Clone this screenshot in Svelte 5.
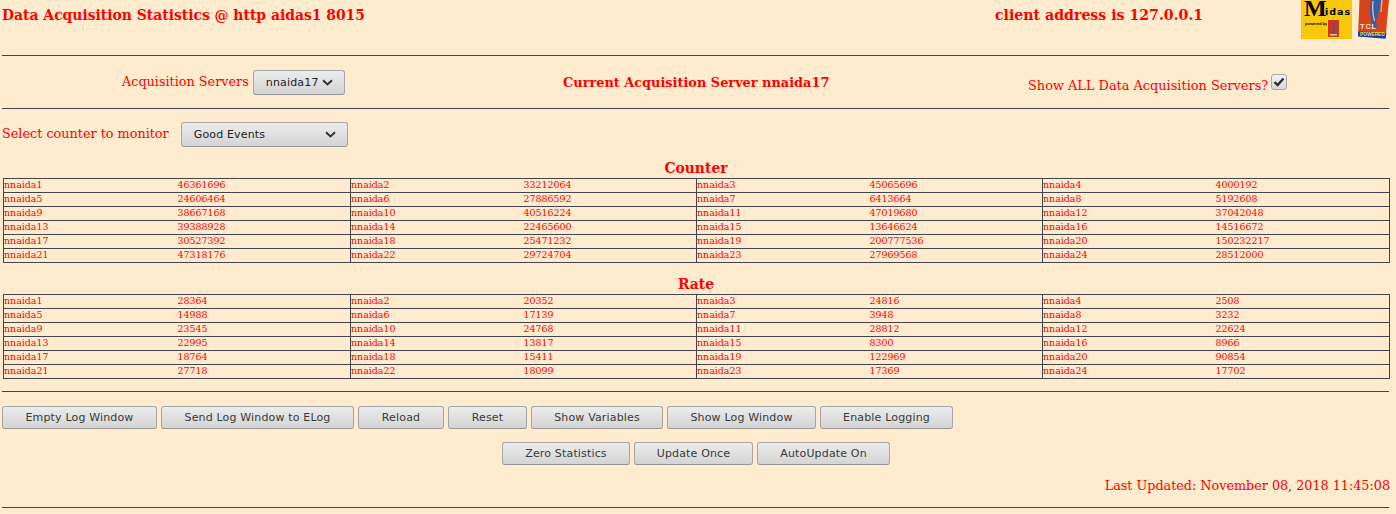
<script>
  const counters = [46361696, 33212064, 45065696, 4000192, 24606464, 27886592, 6413664, 5192608, 38667168, 40516224, 47019680, 37042048, 39388928, 22465600, 13646624, 14516672, 30527392, 25471232, 200777536, 150232217, 47318176, 29724704, 27969568, 28512000];
  const rates = [28364, 20352, 24816, 2508, 14988, 17139, 3948, 3232, 23545, 24768, 28812, 22624, 22995, 13817, 8300, 8966, 18764, 15411, 122969, 90854, 27718, 18099, 17369, 17702];

  const tables = [
    { title: 'Counter', values: counters },
    { title: 'Rate', values: rates }
  ];

  function toRows(values) {
    const rows = [];
    for (let i = 0; i < values.length; i += 4) {
      rows.push(values.slice(i, i + 4).map((v, j) => ({ name: 'nnaida' + (i + j + 1), value: v })));
    }
    return rows;
  }

  const row1 = ['Empty Log Window', 'Send Log Window to ELog', 'Reload', 'Reset', 'Show Variables', 'Show Log Window', 'Enable Logging'];
  const row2 = ['Zero Statistics', 'Update Once', 'AutoUpdate On'];
</script>

<div class="page">
  <header class="top">
    <b class="title">Data Acquisition Statistics @ http aidas1 8015</b>
    <b class="client">client address is 127.0.0.1</b>
    <div class="logo-midas">
      <span class="big-m">M</span>
      <span class="idas">idas</span>
      <span class="powered">powered by</span>
      <svg class="mini-tcl" width="13" height="19" viewBox="0 0 13 19">
        <rect x="0.5" y="0.5" width="12" height="18" fill="#d8301c" stroke="#f5e23a" />
        <path d="M6 3L7.5 3L7.6 10L8.4 14H5.2L6 10Z" fill="#2b5fb0" />
        <rect x="3" y="15" width="7" height="1.5" fill="#f5d23a" />
      </svg>
    </div>
    <div class="logo-tcl">
      <svg width="32" height="39" viewBox="0 0 32 39">
        <path d="M1.5 0H31L27.5 38L0 36Z" fill="#d8431a" />
        <path d="M13 0C11 8 12 16 14 23L13 27H19L18 21L21 10L23 0Z" fill="#2b5fb0" />
        <path d="M15 1C14 9 15 15 16.5 21" stroke="#e8b49a" stroke-width="1.4" fill="none" />
        <path d="M24 0L23 12" stroke="#f0e0d0" stroke-width="1" fill="none" />
        <path d="M0 31.5L28.5 33L27.5 38.8L0 36.5Z" fill="#1238b8" />
      </svg>
      <span class="tcl-word">TCL</span>
      <span class="tcl-sub">POWERED</span>
    </div>
  </header>
  <hr />

  <section class="servers">
    <div class="srv-left">
      <span>Acquisition Servers</span>
      <button class="select small">nnaida17
        <svg width="11" height="7" viewBox="0 0 11 7"><path d="M1 1.2L5.5 5.4L10 1.2" fill="none" stroke="#333" stroke-width="2" /></svg>
      </button>
    </div>
    <b class="srv-current">Current Acquisition Server nnaida17</b>
    <div class="srv-right">
      <span>Show ALL Data Acquisition Servers?</span>
      <span class="check">
        <svg width="12" height="10" viewBox="0 0 12 10"><path d="M1.5 5L4.6 8L10.5 1.5" fill="none" stroke="#2c2c2c" stroke-width="2.4" /></svg>
      </span>
    </div>
  </section>
  <hr />

  <section class="monitor">
    <span>Select counter to monitor</span>
    <button class="select wide">Good Events
      <svg width="11" height="7" viewBox="0 0 11 7"><path d="M1 1.2L5.5 5.4L10 1.2" fill="none" stroke="#333" stroke-width="2" /></svg>
    </button>
  </section>

  {#each tables as t}
    <h3>{t.title}</h3>
    <table>
      <tbody>
        {#each toRows(t.values) as row}
          <tr>
            {#each row as cell}
              <td class="name">{cell.name}</td>
              <td class="val">{cell.value}</td>
            {/each}
          </tr>
        {/each}
      </tbody>
    </table>
  {/each}

  <hr />

  <div class="buttons first">
    {#each row1 as label}
      <button class="btn">{label}</button>
    {/each}
  </div>
  <div class="buttons second">
    {#each row2 as label}
      <button class="btn">{label}</button>
    {/each}
  </div>

  <div class="updated">Last Updated: November 08, 2018 11:45:08</div>
  <hr class="hr-last" />
</div>

<style>
  :global(body) {
    margin: 0;
    background: #ffebcd;
  }

  .page {
    width: 1396px;
    height: 514px;
    overflow: hidden;
    font-family: "DejaVu Serif", serif;
    font-size: 12.8px;
    color: #ff0000;
  }

  hr {
    height: 0;
    margin: 0 7px 0 2px;
    border: 0;
    border-top: 1px solid #44444f;
  }

  .top {
    display: grid;
    grid-template-columns: 993px 306px 57px 32px;
    height: 55px;
    padding-left: 2px;
    font-size: 14px;
  }

  .title,
  .client {
    padding-top: 7px;
    line-height: 16px;
  }

  .title {
    font-size: 13.92px;
  }

  .client {
    font-size: 14.14px;
  }

  .logo-midas {
    position: relative;
    width: 51px;
    height: 39px;
    background: #f8c80c;
    color: #000;
  }

  .big-m {
    position: absolute;
    left: 3px;
    top: 0;
    font-family: "Liberation Serif", serif;
    font-weight: bold;
    font-size: 24px;
    line-height: 17px;
  }

  .idas {
    position: absolute;
    left: 24px;
    top: 6px;
    font-family: "DejaVu Sans", sans-serif;
    font-weight: bold;
    font-size: 9.5px;
    line-height: 11px;
    letter-spacing: 1px;
  }

  .powered {
    position: absolute;
    left: 4px;
    top: 21px;
    font-family: "Liberation Sans", sans-serif;
    font-size: 4px;
    line-height: 5px;
    font-weight: bold;
    white-space: nowrap;
  }

  .mini-tcl {
    position: absolute;
    left: 26px;
    top: 19px;
  }

  .logo-tcl {
    position: relative;
    height: 39px;
  }

  .logo-tcl svg {
    display: block;
  }

  .tcl-word {
    position: absolute;
    left: 2px;
    top: 23px;
    font-family: "Liberation Sans", sans-serif;
    font-weight: bold;
    font-size: 7.5px;
    line-height: 8px;
    letter-spacing: 0.8px;
    color: #f6ecdc;
  }

  .tcl-sub {
    position: absolute;
    left: 2px;
    top: 32px;
    font-family: "Liberation Sans", sans-serif;
    font-weight: bold;
    font-size: 4.8px;
    line-height: 6px;
    color: #e9e23a;
  }

  .servers {
    display: grid;
    grid-template-columns: 561px 465px 1fr;
    height: 52px;
    padding-left: 2px;
  }

  .srv-left {
    display: flex;
    align-items: flex-start;
    gap: 4px;
    padding: 14px 0 0 120px;
  }

  .srv-left span {
    padding-top: 4px;
    line-height: 16px;
  }

  .srv-current {
    padding-top: 19px;
    line-height: 16px;
    font-size: 12.9px;
  }

  .srv-right {
    display: flex;
    align-items: flex-start;
    gap: 3px;
    padding-top: 18px;
    font-size: 12.9px;
  }

  .srv-right span:first-child {
    padding-top: 4px;
    line-height: 16px;
  }

  .check {
    display: flex;
    align-items: center;
    justify-content: center;
    box-sizing: border-box;
    width: 16px;
    height: 16px;
    border: 1px solid #a5a5a5;
    border-radius: 3px;
    background: linear-gradient(#f4f4f4, #d6d6d6);
  }

  .select,
  .btn {
    box-sizing: border-box;
    border: 1px solid #a6a6a6;
    border-bottom-color: #959595;
    border-radius: 3px;
    background: linear-gradient(#ececec, #d4d4d4);
    font-family: "DejaVu Sans", sans-serif;
    font-size: 11px;
    letter-spacing: 0.16px;
  }

  .select {
    display: flex;
    align-items: center;
    justify-content: space-between;
    height: 25px;
    color: #222;
  }

  .small {
    width: 92px;
    padding: 0 11px 0 12px;
  }

  .wide {
    width: 167px;
    margin-left: 12px;
    padding: 0 11px 0 12px;
  }

  .monitor {
    display: flex;
    align-items: flex-start;
    height: 50px;
    padding: 13px 0 0 2px;
    box-sizing: border-box;
  }

  .monitor span {
    padding-top: 4px;
    line-height: 16px;
  }

  h3 {
    margin: 0 4px 0 0;
    height: 19px;
    font-size: 13.9px;
    line-height: 19px;
    text-align: center;
  }

  table {
    width: 1387px;
    margin: 0 0 12px 3px;
    border-collapse: collapse;
    table-layout: fixed;
    font-size: 9.45px;
  }

  td {
    box-sizing: border-box;
    height: 14px;
    padding: 0 0 1px;
    border-top: 1px solid #44444f;
    border-bottom: 1px solid #44444f;
    line-height: 12px;
    white-space: nowrap;
  }

  td.name {
    border-left: 1px solid #44444f;
    width: 173px;
  }

  td.name:first-child {
    width: 174px;
  }

  td.val {
    width: 173px;
  }

  td.val:last-child {
    border-right: 1px solid #44444f;
    width: 174px;
  }

  .buttons {
    display: flex;
    gap: 4px;
  }

  .btn {
    height: 23px;
    padding: 0;
    color: #3a3a3a;
  }

  .first {
    padding: 14px 0 0 2px;
  }

  .first .btn:nth-child(1) { width: 155px; }
  .first .btn:nth-child(2) { width: 193px; }
  .first .btn:nth-child(3) { width: 86px; }
  .first .btn:nth-child(4) { width: 79px; }
  .first .btn:nth-child(5) { width: 132px; }
  .first .btn:nth-child(6) { width: 149px; }
  .first .btn:nth-child(7) { width: 133px; }

  .second {
    justify-content: center;
    padding: 13px 4px 0 0;
  }

  .second .btn:nth-child(1) { width: 128px; }
  .second .btn:nth-child(2) { width: 119px; }
  .second .btn:nth-child(3) { width: 133px; }

  .updated {
    text-align: right;
    padding: 13px 6px 0 0;
    line-height: 16px;
    font-size: 12.75px;
  }

  .hr-last {
    margin-top: 13px;
  }
</style>
